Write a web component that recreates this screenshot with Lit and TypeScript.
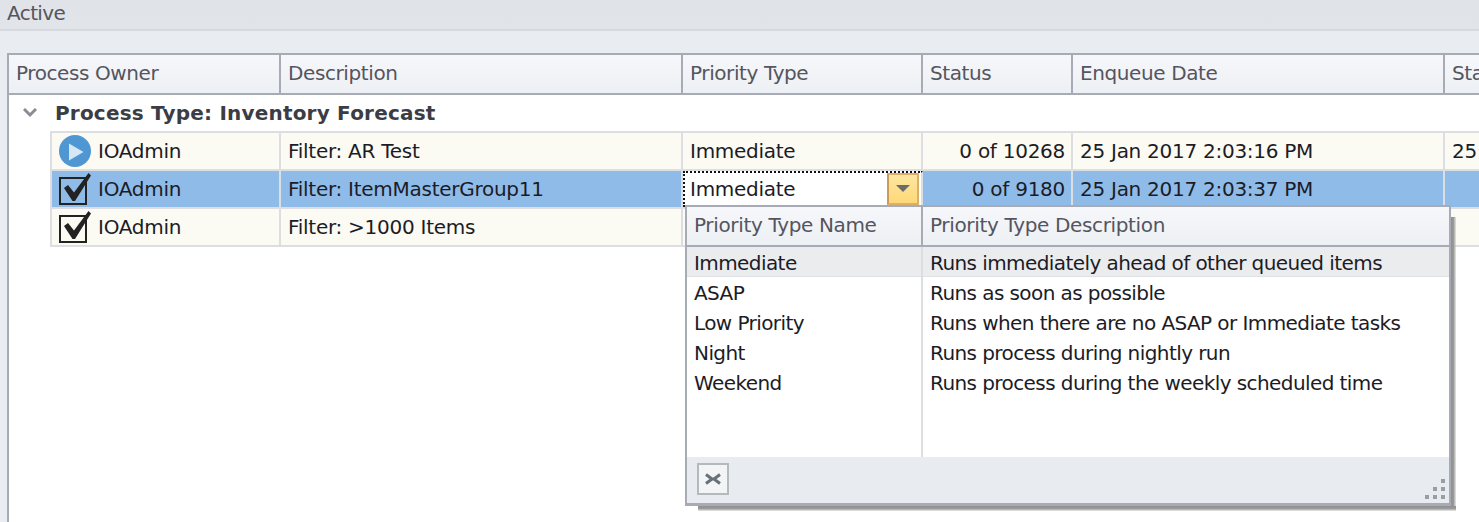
import { LitElement, html, css, svg } from 'lit';
import { customElement } from 'lit/decorators.js';

const columns = ['Process Owner', 'Description', 'Priority Type', 'Status', 'Enqueue Date', 'Start Date'];

const rows = [
  { icon: 'play', desc: 'Filter: AR Test', priority: 'Immediate', status: '0 of 10268', date: '25 Jan 2017 2:03:16 PM', start: '25 Jan 2017 2:03:20 PM' },
  { icon: 'check', desc: 'Filter: ItemMasterGroup11', priority: 'Immediate', status: '0 of 9180', date: '25 Jan 2017 2:03:37 PM', start: '', selected: true },
  // the rest of this row sits under the open dropdown
  { icon: 'check', desc: 'Filter: >1000 Items', priority: '', status: '', date: '', start: '' },
];

const priorities = [
  ['Immediate', 'Runs immediately ahead of other queued items'],
  ['ASAP', 'Runs as soon as possible'],
  ['Low Priority', 'Runs when there are no ASAP or Immediate tasks'],
  ['Night', 'Runs process during nightly run'],
  ['Weekend', 'Runs process during the weekly scheduled time'],
];

const playIcon = svg`<circle cx="17" cy="19" r="16" fill="#4f97d3"/><path d="M11 11.5 L25.5 20 L11 28.5 Z" fill="#d5e6f5"/>`;
const checkIcon = svg`<rect x="2" y="8" width="26" height="26" fill="none" stroke="#222" stroke-width="2"/>
  <path d="M6 18 L10 15 L16 22.5 L30.5 3 L33 5.5 L17 31 L14.5 31 Z" fill="#222"/>`;

@customElement('app-root')
export class AppRoot extends LitElement {
  static styles = css`
    :host {
      display: block;
      position: relative;
      height: 522px;
      overflow: hidden;
      background: #e9ecf0;
      font-family: "DejaVu Sans", sans-serif;
      font-size: 20px;
      letter-spacing: -0.27px;
      color: #1c1c26;
    }

    .title {
      height: 31px;
      box-sizing: border-box;
      padding-left: 7px;
      line-height: 26px;
      letter-spacing: -0.6px;
      color: #55555f;
      background: linear-gradient(#e0e3e7, #e1e4e8);
      border-bottom: 2px solid #d6d9dd;
    }

    .grid {
      margin: 22px 0 0 7px;
      border-top: 2px solid #a7abb5;
      border-left: 2px solid #a7abb5;
      background: #fff;
      height: 470px;
      width: 1600px;
    }

    .header, .row {
      display: grid;
      grid-template-columns: 272px 402px 240px 150px 372px 300px;
    }

    .header {
      height: 40px;
      box-sizing: border-box;
      border-bottom: 2px solid #a7abb5;
      background: linear-gradient(#f6f7fa, #edf0f4);
      color: #55555f;
      letter-spacing: -0.4px;
    }

    .header div {
      box-sizing: border-box;
      border-right: 2px solid #a7abb5;
      padding-left: 7px;
      line-height: 37px;
    }

    .group {
      display: flex;
      align-items: center;
      height: 36px;
      color: #3c3c44;
      font-weight: bold;
    }

    .group svg {
      margin: 0 18px 0 14px;
    }

    .group span {
      letter-spacing: 0.2px;
    }

    .row {
      grid-template-columns: 229px 402px 240px 150px 372px 300px;
      height: 38px;
      margin-left: 41px;
      box-sizing: border-box;
      border-top: 2px solid #dcdee2;
      border-left: 2px solid #dcdee2;
      background: #fbfaf3;
    }

    .row.last {
      height: 40px;
      border-bottom: 2px solid #dcdee2;
    }

    .row.selected {
      background: #8fbbe9;
    }

    .cell {
      box-sizing: border-box;
      border-right: 2px solid #dcdee2;
      padding: 0 6px 0 7px;
      display: flex;
      align-items: center;
      height: 36px;
      white-space: nowrap;
    }

    .owner {
      padding-left: 6px;
    }

    .owner svg {
      margin: -4px 6px 0 0;
      flex: none;
      overflow: visible;
    }

    .num {
      justify-content: flex-end;
    }

    .editor {
      background: #fff;
      border-top: 2px dotted #111;
      border-left: 2px dotted #111;
      padding: 0 2px 2px 5px;
      justify-content: space-between;
    }

    .drop {
      width: 32px;
      height: 32px;
      box-sizing: border-box;
      border: 2px solid #dcae6a;
      border-left-color: #cf9a58;
      background: linear-gradient(#fde6a0, #fdd878);
      display: flex;
      align-items: center;
      justify-content: center;
    }

    .popup {
      position: absolute;
      left: 685px;
      top: 205px;
      width: 766px;
      height: 301px;
      box-sizing: border-box;
      border: 2px solid #a7abb5;
      border-bottom-width: 3px;
      background: #fff;
      display: flex;
      flex-direction: column;
    }

    /* the shadow only starts some way in from the top left corner */
    .popup::before, .popup::after {
      content: "";
      position: absolute;
    }

    .popup::before {
      left: 11px;
      right: -7px;
      bottom: -8px;
      height: 5px;
      background: linear-gradient(#8f8f8f, #9a9a9a 50%, rgba(200, 200, 200, 0.4));
    }

    .popup::after {
      top: 10px;
      bottom: -3px;
      right: -7px;
      width: 5px;
      background: linear-gradient(to right, #8f8f8f, #9a9a9a 50%, rgba(200, 200, 200, 0.4));
    }

    .popup-head {
      display: grid;
      grid-template-columns: 236px 1fr;
      height: 40px;
      box-sizing: border-box;
      flex: none;
      border-bottom: 2px solid #a7abb5;
      background: linear-gradient(#f6f7fa, #edf0f4);
      color: #55555f;
      letter-spacing: -0.35px;
    }

    .popup-head div {
      padding-left: 7px;
      line-height: 37px;
      white-space: nowrap;
    }

    .popup-head div:first-child {
      border-right: 2px solid #a7abb5;
      box-sizing: border-box;
    }

    .popup-body {
      flex: 1;
      display: grid;
      grid-template-columns: 236px 1fr;
      grid-auto-rows: 30px;
      letter-spacing: -0.58px;
    }

    .popup-row {
      grid-column: 1 / 3;
      display: grid;
      grid-template-columns: 236px 1fr;
      height: 30px;
      box-sizing: border-box;
    }

    .popup-row div {
      box-sizing: border-box;
      padding: 1px 0 0 7px;
      line-height: 30px;
      white-space: nowrap;
    }

    .popup-row div:first-child {
      border-right: 2px solid #dcdee2;
    }

    .popup-row.current {
      background: #ebecee;
      border-bottom: 1px solid #dfe1e4;
    }

    .filler {
      grid-column: 1;
      grid-row: span 2;
      box-sizing: border-box;
      border-right: 2px solid #dcdee2;
    }

    .footer {
      flex: none;
      height: 46px;
      background: #e8ebef;
      display: flex;
      align-items: flex-start;
      justify-content: space-between;
      padding: 6px 4px 0 10px;
      box-sizing: border-box;
    }

    .close {
      width: 32px;
      height: 32px;
      box-sizing: border-box;
      border: 2px solid #b5b8bd;
      background: #f3f4f6;
      display: flex;
      align-items: center;
      justify-content: center;
    }

    .grip {
      margin-top: 16px;
    }
  `;

  renderRow(r: any, i: number) {
    return html`
      <div class="row ${r.selected ? 'selected' : ''} ${i === rows.length - 1 ? 'last' : ''}">
        <div class="cell owner">
          <svg width="34" height="34" viewBox="0 0 34 34">${r.icon === 'play' ? playIcon : checkIcon}</svg>
          IOAdmin
        </div>
        <div class="cell">${r.desc}</div>
        ${r.selected
          ? html`<div class="cell editor">
              ${r.priority}
              <div class="drop">
                <svg width="14" height="9" viewBox="0 0 14 9"><path d="M0 0 H14 L7 7 Z" fill="#6b6b6b"/></svg>
              </div>
            </div>`
          : html`<div class="cell">${r.priority}</div>`}
        <div class="cell num">${r.status}</div>
        <div class="cell">${r.date}</div>
        <div class="cell">${r.start}</div>
      </div>
    `;
  }

  render() {
    return html`
      <div class="title">Active</div>
      <div class="grid">
        <div class="header">${columns.map((c) => html`<div>${c}</div>`)}</div>
        <div class="group">
          <svg width="14" height="10" viewBox="0 0 14 10"><path d="M1 1 L7 7 L13 1" fill="none" stroke="#8a8d94" stroke-width="3"/></svg>
          <span>Process Type: Inventory Forecast</span>
        </div>
        ${rows.map((r, i) => this.renderRow(r, i))}
      </div>
      <div class="popup">
        <div class="popup-head"><div>Priority Type Name</div><div>Priority Type Description</div></div>
        <div class="popup-body">
          ${priorities.map(
            (p, i) => html`<div class="popup-row ${i === 0 ? 'current' : ''}"><div>${p[0]}</div><div>${p[1]}</div></div>`
          )}
          <div class="filler"></div>
        </div>
        <div class="footer">
          <div class="close">
            <svg width="18" height="12" viewBox="0 0 18 12"><path d="M2 1.5 L8 6 L2 10.5 M16 1.5 L10 6 L16 10.5 M7 6 H11" fill="none" stroke="#687079" stroke-width="3"/></svg>
          </div>
          <svg class="grip" width="20" height="20" viewBox="0 0 20 20" fill="#9a9ea3">
            <rect x="16" y="0" width="4" height="4"/>
            <rect x="8" y="8" width="4" height="4"/><rect x="16" y="8" width="4" height="4"/>
            <rect x="0" y="16" width="4" height="4"/><rect x="8" y="16" width="4" height="4"/><rect x="16" y="16" width="4" height="4"/>
          </svg>
        </div>
      </div>
    `;
  }
}
